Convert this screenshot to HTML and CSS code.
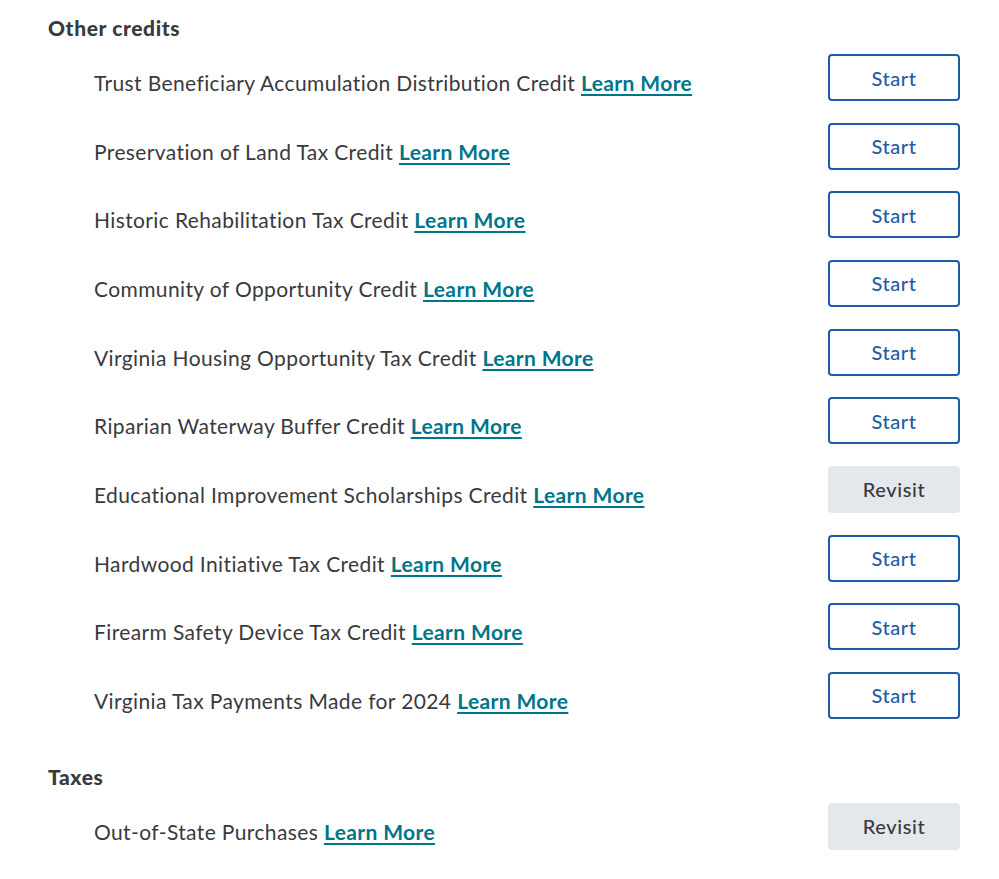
FILE: index.html
```html
<!DOCTYPE html>
<html lang="en">
<head>
    <meta charset="UTF-8">
    <meta name="viewport" content="width=device-width, initial-scale=1.0">
    <title>Other credits</title>
    <link rel="stylesheet" href="styles.css">
</head>
<body>
    <div class="section">
        <h2>Other credits</h2>
        <div class="row">
            <span class="label">Trust Beneficiary Accumulation Distribution Credit <a href="#">Learn More</a></span>
            <button class="btn">Start</button>
        </div>
        <div class="row">
            <span class="label">Preservation of Land Tax Credit <a href="#">Learn More</a></span>
            <button class="btn">Start</button>
        </div>
        <div class="row">
            <span class="label">Historic Rehabilitation Tax Credit <a href="#">Learn More</a></span>
            <button class="btn">Start</button>
        </div>
        <div class="row">
            <span class="label">Community of Opportunity Credit <a href="#">Learn More</a></span>
            <button class="btn">Start</button>
        </div>
        <div class="row">
            <span class="label">Virginia Housing Opportunity Tax Credit <a href="#">Learn More</a></span>
            <button class="btn">Start</button>
        </div>
        <div class="row">
            <span class="label">Riparian Waterway Buffer Credit <a href="#">Learn More</a></span>
            <button class="btn">Start</button>
        </div>
        <div class="row">
            <span class="label">Educational Improvement Scholarships Credit <a href="#">Learn More</a></span>
            <button class="btn revisit">Revisit</button>
        </div>
        <div class="row">
            <span class="label">Hardwood Initiative Tax Credit <a href="#">Learn More</a></span>
            <button class="btn">Start</button>
        </div>
        <div class="row">
            <span class="label">Firearm Safety Device Tax Credit <a href="#">Learn More</a></span>
            <button class="btn">Start</button>
        </div>
        <div class="row">
            <span class="label">Virginia Tax Payments Made for 2024 <a href="#">Learn More</a></span>
            <button class="btn">Start</button>
        </div>
    </div>
    <div class="section">
        <h2>Taxes</h2>
        <div class="row">
            <span class="label">Out-of-State Purchases <a href="#">Learn More</a></span>
            <button class="btn revisit">Revisit</button>
        </div>
    </div>
</body>
</html>
```

FILE: styles.css
```css
body {
    font-family: Lato, "Open Sans", sans-serif;
    color: #393a3d;
    margin: 0;
    padding: 15px 39px 0 48px;
}
.section {
    margin-bottom: 23px;
}
h2 {
    font-size: 21px;
    font-weight: 900;
    letter-spacing: 0.6px;
    margin: 0 0 13px;
    line-height: 26px;
}
.row {
    display: flex;
    justify-content: space-between;
    align-items: flex-start;
    height: 68.67px;
    padding-left: 46px;
}
.label {
    font-size: 21px;
    letter-spacing: 0.38px;
    line-height: 26px;
    padding-top: 16px;
}
.label a {
    color: #00758a;
    font-weight: 700;
    text-decoration: underline;
    text-underline-offset: 3px;
}
.btn {
    width: 132px;
    height: 47px;
    font-family: inherit;
    font-size: 20px;
    font-weight: 500;
    letter-spacing: 0.6px;
    color: #1f5ca8;
    background-color: white;
    border: 2px solid #1f5ca8;
    border-radius: 4px;
    cursor: pointer;
    padding: 0;
}
.btn.revisit {
    background-color: #e3e8ec;
    border-color: #e3e8ec;
    color: #393a3d;
}
```
